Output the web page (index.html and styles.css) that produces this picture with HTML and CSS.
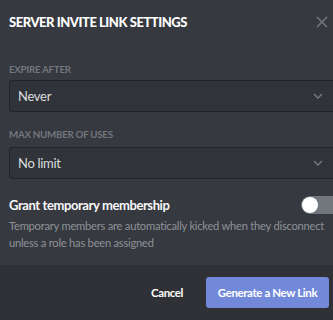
FILE: index.html
```html
<!DOCTYPE html>
<html lang="en">
<head>
    <meta charset="UTF-8">
    <title>Server Invite Link Settings</title>
    <link rel="stylesheet" href="styles.css">
</head>
<body>
    <div class="modal">
        <div class="modal-body">
            <div class="header">
                <h2>Server Invite Link Settings</h2>
                <svg class="close" width="12" height="12" viewBox="0 0 12 12">
                    <path d="M1 1L11 11M11 1L1 11" stroke="#72767d" stroke-width="1.6"/>
                </svg>
            </div>

            <div class="form-group">
                <label>Expire after</label>
                <div class="select">
                    <span>Never</span>
                    <svg class="chevron" width="10" height="6" viewBox="0 0 10 6">
                        <path d="M1 1L5 5L9 1" fill="none" stroke="#72767d" stroke-width="1.5"/>
                    </svg>
                </div>
            </div>

            <div class="form-group">
                <label>Max number of uses</label>
                <div class="select">
                    <span>No limit</span>
                    <svg class="chevron" width="10" height="6" viewBox="0 0 10 6">
                        <path d="M1 1L5 5L9 1" fill="none" stroke="#72767d" stroke-width="1.5"/>
                    </svg>
                </div>
            </div>

            <div class="switch-row">
                <span class="switch-title">Grant temporary membership</span>
                <div class="toggle"><div class="knob"></div></div>
            </div>
            <p class="note">Temporary members are automatically kicked when they disconnect unless a role has been assigned</p>
        </div>

        <div class="footer">
            <button class="cancel">Cancel</button>
            <button class="primary">Generate a New Link</button>
        </div>
    </div>
</body>
</html>
```

FILE: styles.css
```css
body {
    margin: 0;
    background: #36393f;
    font-family: Lato, sans-serif;
    overflow: hidden;
}
.modal {
    width: 333px;
    height: 320px;
    display: flex;
    flex-direction: column;
    background: #36393f;
}
.modal-body {
    flex: 1;
    padding: 0 0 0 9px;
}
.header {
    display: flex;
    align-items: center;
    justify-content: space-between;
    height: 44px;
    padding-right: 5px;
}
h2 {
    margin: 0;
    color: #fff;
    font-size: 13px;
    font-weight: 900;
    letter-spacing: -0.45px;
    text-transform: uppercase;
}
.form-group {
    margin-top: 19px;
}
.form-group + .form-group {
    margin-top: 16px;
}
label {
    display: block;
    color: #72767d;
    font-size: 9.8px;
    line-height: 13px;
    font-weight: 700;
    letter-spacing: -0.3px;
    text-transform: uppercase;
    margin-bottom: 4px;
}
.form-group + .form-group label {
    margin-bottom: 6px;
}
.select {
    display: flex;
    align-items: center;
    justify-content: space-between;
    height: 30px;
    margin-right: -10px;
    padding: 0 19px 0 8px;
    background: #303339;
    border: 1px solid #222428;
    border-radius: 3px;
    color: #dcddde;
    font-size: 13px;
    letter-spacing: -0.3px;
}
.switch-row {
    display: flex;
    align-items: center;
    justify-content: space-between;
    height: 18px;
    margin-top: 17px;
}
.switch-title {
    color: #f6f6f7;
    font-size: 13px;
    font-weight: 700;
    letter-spacing: -0.4px;
}
.toggle {
    width: 42px;
    height: 18px;
    margin-right: -11px;
    border-radius: 9px;
    background: #72767d;
    display: flex;
    align-items: center;
    padding-left: 1px;
}
.knob {
    width: 16px;
    height: 16px;
    border-radius: 50%;
    background: #fff;
}
.note {
    margin: 3px 0 0;
    padding-right: 4px;
    color: #8e9297;
    font-size: 11.2px;
    line-height: 17px;
    letter-spacing: -0.25px;
}
.footer {
    height: 55px;
    background: #2f3136;
    display: flex;
    align-items: center;
    justify-content: flex-end;
    padding-right: 4px;
    gap: 23px;
}
button {
    border: none;
    font-family: inherit;
    font-size: 11.5px;
    font-weight: 700;
    letter-spacing: -0.4px;
    color: #fff;
    cursor: pointer;
}
.cancel {
    background: none;
    padding: 0;
}
.primary {
    background: #7289da;
    border-radius: 3px;
    width: 123px;
    height: 31px;
    padding: 0;
}
```
